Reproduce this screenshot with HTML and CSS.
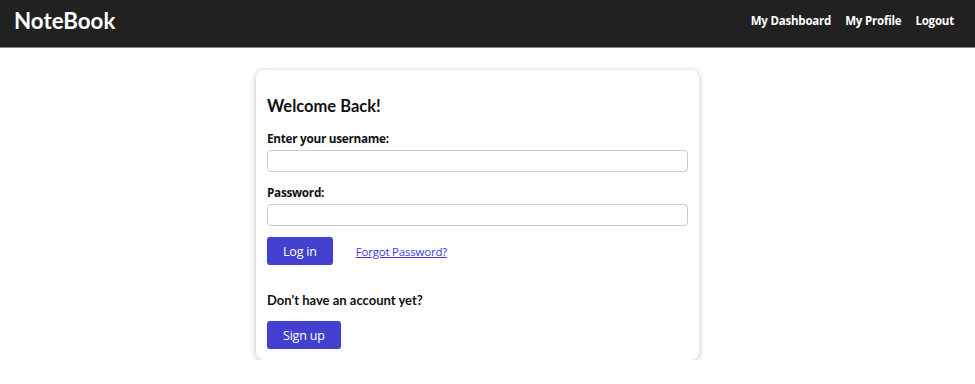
FILE: index.html
```html
<!DOCTYPE html>
<html lang="en">
<head>
  <meta charset="UTF-8" />
  <meta name="viewport" content="width=device-width, initial-scale=1.0" />
  <title>NoteBook - Login</title>
  <link rel="stylesheet" href="styles.css">
</head>
<body>
  <nav class="navbar">
    <a class="brand" href="#">NoteBook</a>
    <div class="nav-links">
      <a href="#">My Dashboard</a>
      <a href="#">My Profile</a>
      <a href="#">Logout</a>
    </div>
  </nav>

  <main class="page">
    <div class="card">
      <h2 class="card-title">Welcome Back!</h2>
      <form class="login-form">
        <label for="username">Enter your username:</label>
        <input type="text" id="username">
        <label for="password">Password:</label>
        <input type="password" id="password">
        <div class="actions">
          <button type="button" class="btn">Log in</button>
          <a href="#" class="forgot">Forgot Password?</a>
        </div>
      </form>
      <h3 class="signup-text">Don't have an account yet?</h3>
      <button type="button" class="btn btn-signup">Sign up</button>
    </div>
  </main>
</body>
</html>
```

FILE: styles.css
```css
* {
  margin: 0;
  padding: 0;
  box-sizing: border-box;
}

body {
  font-family: 'Open Sans', sans-serif;
  background: #fff;
  color: #111;
}

.navbar {
  height: 48px;
  background-color: #212121;
  border-bottom: 1px solid #888;
  display: flex;
  align-items: center;
  justify-content: space-between;
  padding: 0 21px 0 14px;
}

.brand {
  font-family: 'Lato', sans-serif;
  font-weight: bold;
  font-size: 22.3px;
  color: #fff;
  text-decoration: none;
  margin-top: -6px;
}

.nav-links {
  display: flex;
  gap: 14px;
  margin-top: -6px;
}

.nav-links a {
  color: #fff;
  font-weight: bold;
  font-size: 11.5px;
  letter-spacing: -0.2px;
  text-decoration: none;
}

.page {
  display: flex;
  justify-content: center;
  padding-top: 22px;
}

.card {
  width: 443px;
  margin-left: -20px;
  padding: 26px 11px 11px 11px;
  background: #fff;
  border-radius: 8px;
  box-shadow: 0 1px 6px rgba(0, 0, 0, 0.25);
}

.card-title {
  font-family: 'Lato', sans-serif;
  font-weight: bold;
  font-size: 16.5px;
  line-height: 20px;
  margin-bottom: 14px;
}

.login-form {
  display: flex;
  flex-direction: column;
}

.login-form label {
  font-weight: bold;
  font-size: 11.8px;
  letter-spacing: -0.3px;
  line-height: 16px;
  margin-bottom: 4px;
}

.login-form input {
  height: 22px;
  border: 1px solid #ccc;
  border-radius: 4px;
  margin-bottom: 12px;
  font-size: 13px;
  padding: 0 6px;
}

.actions {
  display: flex;
  align-items: center;
  gap: 23px;
  margin-top: -1px;
}

.btn {
  font-family: 'Open Sans', sans-serif;
  background-color: #4340cf;
  color: #fff;
  border: none;
  border-radius: 3px;
  font-size: 12.5px;
  letter-spacing: -0.2px;
  height: 28px;
  padding: 0 16px;
  cursor: pointer;
}

.forgot {
  color: #3d3adb;
  font-size: 11.5px;
  letter-spacing: -0.2px;
}

.signup-text {
  font-family: 'Lato', sans-serif;
  font-weight: bold;
  font-size: 13px;
  line-height: 16px;
  margin-top: 27px;
  margin-bottom: 13px;
}
```
